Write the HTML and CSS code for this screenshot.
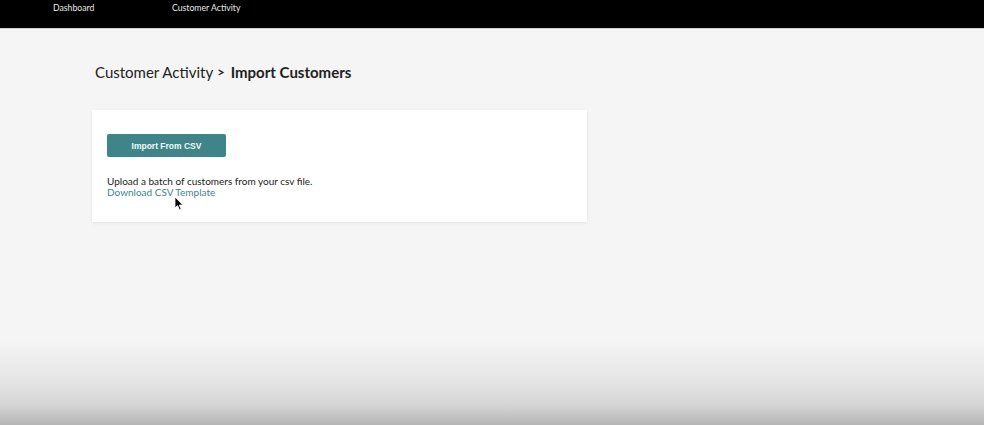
FILE: index.html
```html
<!DOCTYPE html>
<html>
<head>
<meta charset="utf-8">
<link rel="stylesheet" href="styles.css">
</head>
<body>
<header class="topbar">
  <nav class="nav">
    <a class="nav-item">Dashboard</a>
    <a class="nav-item">Customer Activity</a>
  </nav>
</header>
<main class="content">
  <h1 class="crumbs"><span class="crumb">Customer Activity</span><span class="sep">&gt;</span><span class="crumb-current">Import Customers</span></h1>
  <section class="card">
    <button class="btn">Import From CSV</button>
    <p class="desc">Upload a batch of customers from your csv file.</p>
    <a class="link">Download CSV Template</a>
  </section>
</main>
<div class="fade"></div>
<svg class="cursor" width="10" height="15" viewBox="0 0 10 15"><path d="M1 1 L1 12 L3.6 9.6 L5.6 14 L7.2 13.3 L5.3 9 L8.8 9 Z" fill="#000" stroke="#fff" stroke-width="0.8"/></svg>
</body>
</html>
```
FILE: styles.css
```css
html, body {
  margin: 0;
  padding: 0;
  height: 100%;
}
body {
  background: #f5f5f5;
  font-family: Lato, "Open Sans", sans-serif;
  color: #222;
  position: relative;
  overflow: hidden;
}
.topbar {
  background: #000;
  height: 28px;
  border-bottom: 1px solid #cfcfcf;
}
.nav {
  display: flex;
  padding-left: 53px;
  padding-top: 3px;
}
.nav-item {
  color: #e8e8e8;
  font-size: 8.7px;
  line-height: 10px;
}
.nav-item:first-child {
  width: 119px;
}
.content {
  padding: 34px 0 0 92px;
}
.crumbs {
  margin: 0 0 0 3px;
  font-size: 15px;
  font-weight: normal;
  line-height: 18px;
  color: #222;
  display: flex;
  align-items: center;
}
.sep {
  margin: 0 6px 0 4px;
  font-weight: bold;
  font-size: 13px;
}
.crumb-current {
  font-weight: bold;
}
.card {
  margin-top: 29px;
  width: 495px;
  height: 112px;
  box-sizing: border-box;
  background: #fff;
  box-shadow: 0 1px 3px rgba(0,0,0,0.08);
  padding: 24px 15px 0 15px;
}
.btn {
  display: block;
  width: 119px;
  height: 23px;
  background: #3f8489;
  border: none;
  border-radius: 2px;
  color: #f3f8f8;
  font-family: "Liberation Sans", Arial, sans-serif;
  font-weight: bold;
  font-size: 8.5px;
  padding: 0;
}
.desc {
  margin: 19px 0 0 0;
  font-size: 10px;
  line-height: 11px;
  color: #222;
}
.link {
  display: block;
  font-size: 10px;
  line-height: 11px;
  color: #3f8489;
}
.fade {
  position: absolute;
  left: 0;
  right: 0;
  bottom: 0;
  height: 85px;
  background: linear-gradient(to bottom, #f5f5f5 0%, #e8e8e8 40%, #d6d6d6 75%, #b6b6b6 100%);
}
.cursor {
  position: absolute;
  left: 174px;
  top: 196px;
}
```
